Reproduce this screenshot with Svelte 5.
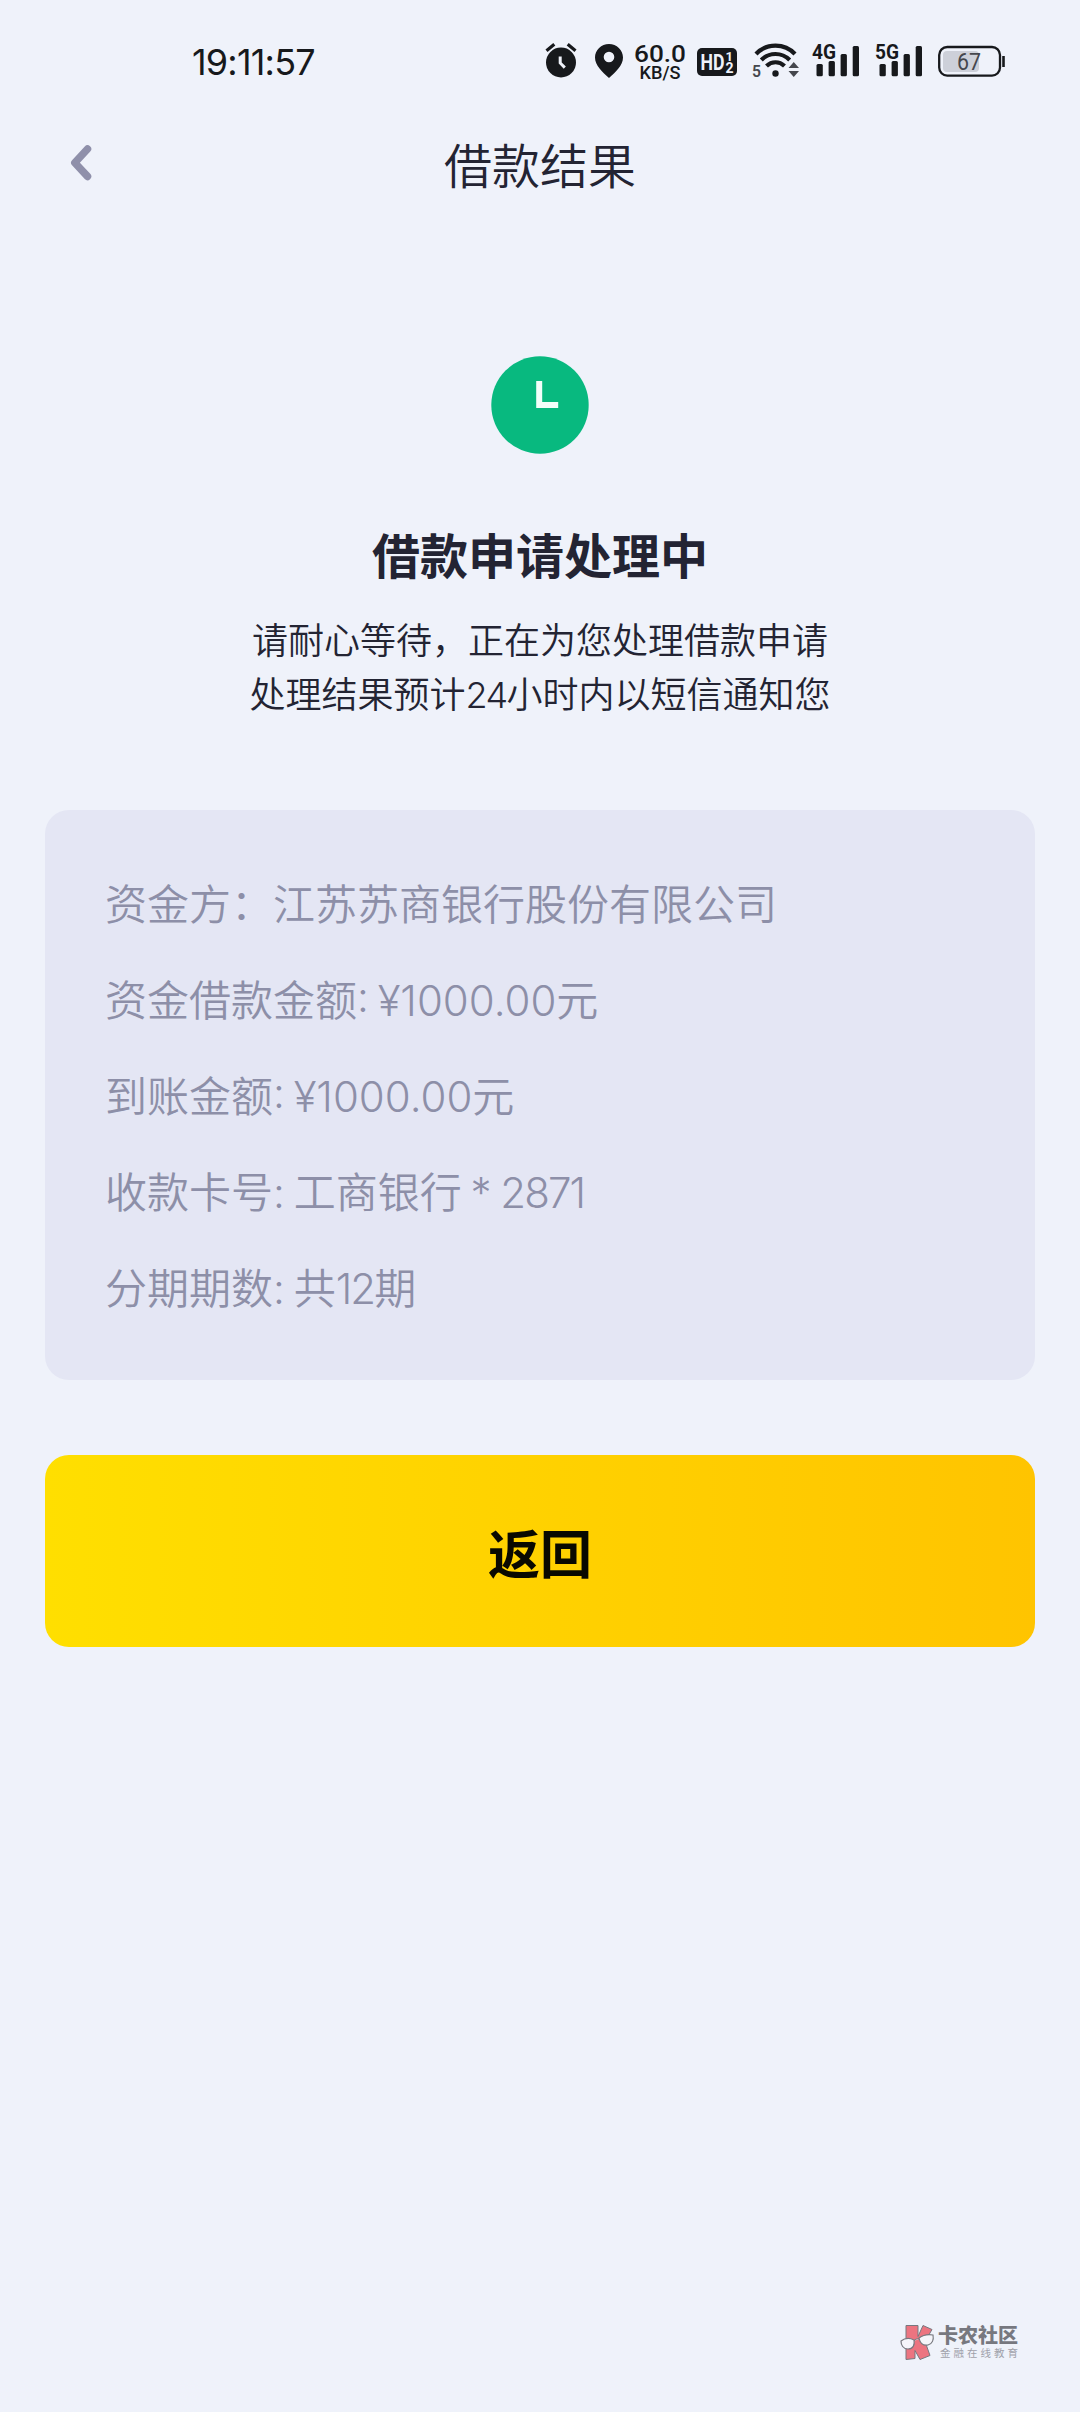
<script>
  const details = [
    { label: '资金方：', value: '江苏苏商银行股份有限公司' },
    { label: '资金借款金额: ', value: '¥1000.00元' },
    { label: '到账金额: ', value: '¥1000.00元' },
    { label: '收款卡号: ', value: '工商银行 * ', digits: '2871' },
    { label: '分期期数: ', value: '共', digits: '12', unit: '期' }
  ];
  const networks = ['4G', '5G'];
</script>

<div class="screen">
  <div class="status">
    <div class="time">19:11:57</div>
    <div class="icons">
      <svg class="alarm" width="32" height="36" viewBox="0 0 32 36">
        <circle cx="16" cy="20.500" r="15" fill="#17191c" />
        <path d="M1.500 8.700 9.300 2.200M30.500 8.700 22.700 2.200" stroke="#17191c" stroke-width="3.200" />
        <path d="M15.200 14.500v6.500l4.600 4.600" fill="none" stroke="#eff2fa" stroke-width="3" />
      </svg>
      <svg class="pin" width="28" height="36" viewBox="0 0 28 36">
        <path fill-rule="evenodd" fill="#17191c" d="M14 2C6.300 2 0 8 0 15.500 0 23.500 7.500 30 14 36 20.500 30 28 23.500 28 15.500 28 8 21.700 2 14 2Zm0 7.700a5.300 5.300 0 1 1 0 10.600 5.300 5.300 0 0 1 0-10.600Z" />
      </svg>
      <svg class="speed" width="54" height="40" viewBox="0 0 54 40">
        <text x="0" y="20.300" font-size="24" font-weight="500" textLength="52" lengthAdjust="spacingAndGlyphs">60.0</text>
        <text x="5.500" y="37" font-size="17.500" font-weight="500" textLength="41" lengthAdjust="spacingAndGlyphs">KB/S</text>
      </svg>
      <svg class="hd" width="40" height="36" viewBox="0 0 40 36">
        <rect x="0" y="6" width="40" height="28" rx="5" fill="#17191c" />
        <text x="3.500" y="27.800" font-size="22" font-weight="700" class="light" textLength="24" lengthAdjust="spacingAndGlyphs">HD</text>
        <text x="28.500" y="18.800" font-size="13" font-weight="700" class="light">1</text>
        <text x="28.500" y="31" font-size="14" font-weight="700" class="light">2</text>
      </svg>
      <svg class="wifi" width="48" height="36" viewBox="0 0 48 36">
        <g fill="none" stroke="#17191c" stroke-width="4.200">
          <path d="M4 12C14.500 .8 32.500 .8 43 12" />
          <path d="M9.300 18c8-8 20.400-8 28.400 0" />
          <path d="M14.500 24c5.200-5 12.800-5 18 0" />
        </g>
        <circle cx="23.500" cy="31.500" r="3.200" fill="#17191c" />
        <text x="0" y="35" font-size="17" font-weight="600" class="muted" textLength="9" lengthAdjust="spacingAndGlyphs">5</text>
        <path d="M36.500 26h10.500l-5.250-6zM36.500 29h10.500l-5.250 6z" fill="#45474d" />
      </svg>
      {#each networks as name}
        <svg class="signal" width="47" height="36" viewBox="0 0 47 36">
          <text x="-1" y="16.500" font-size="20" font-weight="700" textLength="24" lengthAdjust="spacingAndGlyphs">{name}</text>
          <g fill="#17191c">
            <rect x="3.500" y="22" width="6.300" height="12.300" rx="1.500" />
            <rect x="15.600" y="19" width="6.300" height="15.300" rx="1.500" />
            <rect x="27.600" y="12" width="6.300" height="22.300" rx="1.500" />
            <rect x="39.700" y="4" width="6.300" height="30.300" rx="1.500" />
          </g>
        </svg>
      {/each}
      <svg class="battery" width="68" height="36" viewBox="0 0 68 36">
        <rect x="5" y="9" width="36" height="21" rx="4" fill="#cdd0d9" />
        <rect x="1.200" y="5" width="60.800" height="28.600" rx="8" fill="none" stroke="#17191c" stroke-width="2.300" />
        <path d="M65.500 14v11" stroke="#17191c" stroke-width="2.600" />
        <text x="19" y="28" font-size="24" class="muted" textLength="24" lengthAdjust="spacingAndGlyphs">67</text>
      </svg>
    </div>
  </div>

  <header>
    <svg class="back" width="24" height="38" viewBox="0 0 24 38">
      <path d="M17.500 5 4.800 18.700l12.700 13.700" fill="none" stroke="#8f90aa" stroke-width="7.500" stroke-linecap="round" stroke-linejoin="round" />
    </svg>
    <h1>借款结果</h1>
  </header>

  <main>
    <svg class="clock" width="98" height="98" viewBox="0 0 98 98">
      <circle cx="49" cy="49" r="48.700" fill="#08b97f" />
      <path d="M48.200 25v24h19" fill="none" stroke="#f2fffa" stroke-width="6" />
    </svg>
    <h2>借款申请处理中</h2>
    <p class="note">请耐心等待，正在为您处理借款申请<br />处理结果预计<span class="tight">24</span>小时内以短信通知您</p>
    <section class="card">
      {#each details as item}
        <div class="row">{item.label}{item.value}{#if item.digits}<span class="tight">{item.digits}</span>{/if}{item.unit ?? ''}</div>
      {/each}
    </section>
    <button type="button">返回</button>
  </main>

  <footer>
    <svg width="35" height="37" viewBox="0 0 35 37">
      <path d="M6 1.500h12v11l5-11 9 4-7 12 5 14-10 4-5-9v8l-9 1z" fill="#ec7480" stroke="#77787f" stroke-width="1" />
      <path d="M1 17c4-3 9-3 13-1 1 5-1 9-6 9s-7-4-7-8ZM19 14c4-3 9-4 14-3 1 5-1 9-5 10-5 1-8-2-9-7ZM14 17q2-3 5-2" fill="#f5f5fa" stroke="#77787f" stroke-width="1.200" />
    </svg>
    <div class="brand">
      <strong>卡农社区</strong>
      <small>金融在线教育</small>
    </div>
  </footer>
</div>

<style>
  :global(body) {
    background: #eff2fa;
  }
  .screen {
    box-sizing: border-box;
    width: 1080px;
    height: 2412px;
    display: flex;
    flex-direction: column;
    background: #eff2fa;
    color: #232433;
    font-family: Inter, 'Noto Sans CJK SC', sans-serif;
  }
  .status {
    height: 120px;
    box-sizing: border-box;
    padding: 42px 74px 0 192px;
    display: flex;
    justify-content: space-between;
    align-items: flex-start;
  }
  .time {
    font-size: 36px;
    line-height: 41px;
    color: #17191c;
    letter-spacing: -0.8px;
  }
  .icons {
    display: flex;
    align-items: flex-start;
  }
  .icons svg {
    display: block;
    overflow: visible;
  }
  .icons text {
    font-family: Roboto, sans-serif;
    fill: #17191c;
  }
  .icons text.light {
    fill: #eff2fa;
  }
  .icons text.muted {
    fill: #45474d;
  }
  .pin {
    margin-left: 18px;
  }
  .speed {
    margin-left: 11px;
  }
  .hd {
    margin-left: 9px;
  }
  .wifi {
    margin-left: 15px;
  }
  .signal {
    margin-left: 13px;
  }
  .signal + .signal {
    margin-left: 16px;
  }
  .battery {
    margin-left: 15px;
  }
  header {
    height: 90px;
    display: grid;
    grid-template-columns: 70px 1fr 70px;
    align-items: center;
  }
  .back {
    justify-self: end;
    margin: -5px -24px 0 0;
  }
  h1 {
    margin: 0;
    padding-top: 3px;
    text-align: center;
    font-size: 48px;
    line-height: 72px;
    font-weight: 350;
  }
  main {
    flex: 1;
    padding: 146px 45px 0;
    display: flex;
    flex-direction: column;
    align-items: center;
  }
  h2 {
    margin: 67px 0 0;
    font-size: 48px;
    line-height: 72px;
    font-weight: 700;
  }
  .note {
    margin: 21px 0 0;
    text-align: center;
    font-size: 36px;
    line-height: 54px;
    font-weight: 350;
  }
  .tight {
    letter-spacing: -0.045em;
  }
  .card {
    box-sizing: border-box;
    width: 990px;
    height: 570px;
    margin-top: 88px;
    padding: 47px 60px 43px;
    border-radius: 24px;
    background: #e4e6f4;
    color: #8d8fa8;
  }
  .row {
    font-size: 42px;
    line-height: 96px;
    font-weight: 350;
    word-spacing: -3px;
    white-space: nowrap;
  }
  button {
    width: 990px;
    height: 192px;
    margin-top: 75px;
    padding: 9px 0 0;
    border: 0;
    border-radius: 24px;
    background: linear-gradient(90deg, #ffdf00, #ffc400);
    color: #090900;
    font: 700 52px/72px Inter, 'Noto Sans CJK SC', sans-serif;
  }
  footer {
    display: flex;
    justify-content: flex-end;
    gap: 3px;
    padding: 0 62px 51px 0;
  }
  .brand {
    display: flex;
    flex-direction: column;
    white-space: nowrap;
  }
  .brand strong {
    font-size: 20px;
    line-height: 25px;
    font-weight: 900;
    color: #77787f;
  }
  .brand small {
    padding-left: 2px;
    font-size: 10.500px;
    line-height: 10px;
    letter-spacing: 3px;
    margin-right: -3px;
    color: #a0a1aa;
  }
</style>
